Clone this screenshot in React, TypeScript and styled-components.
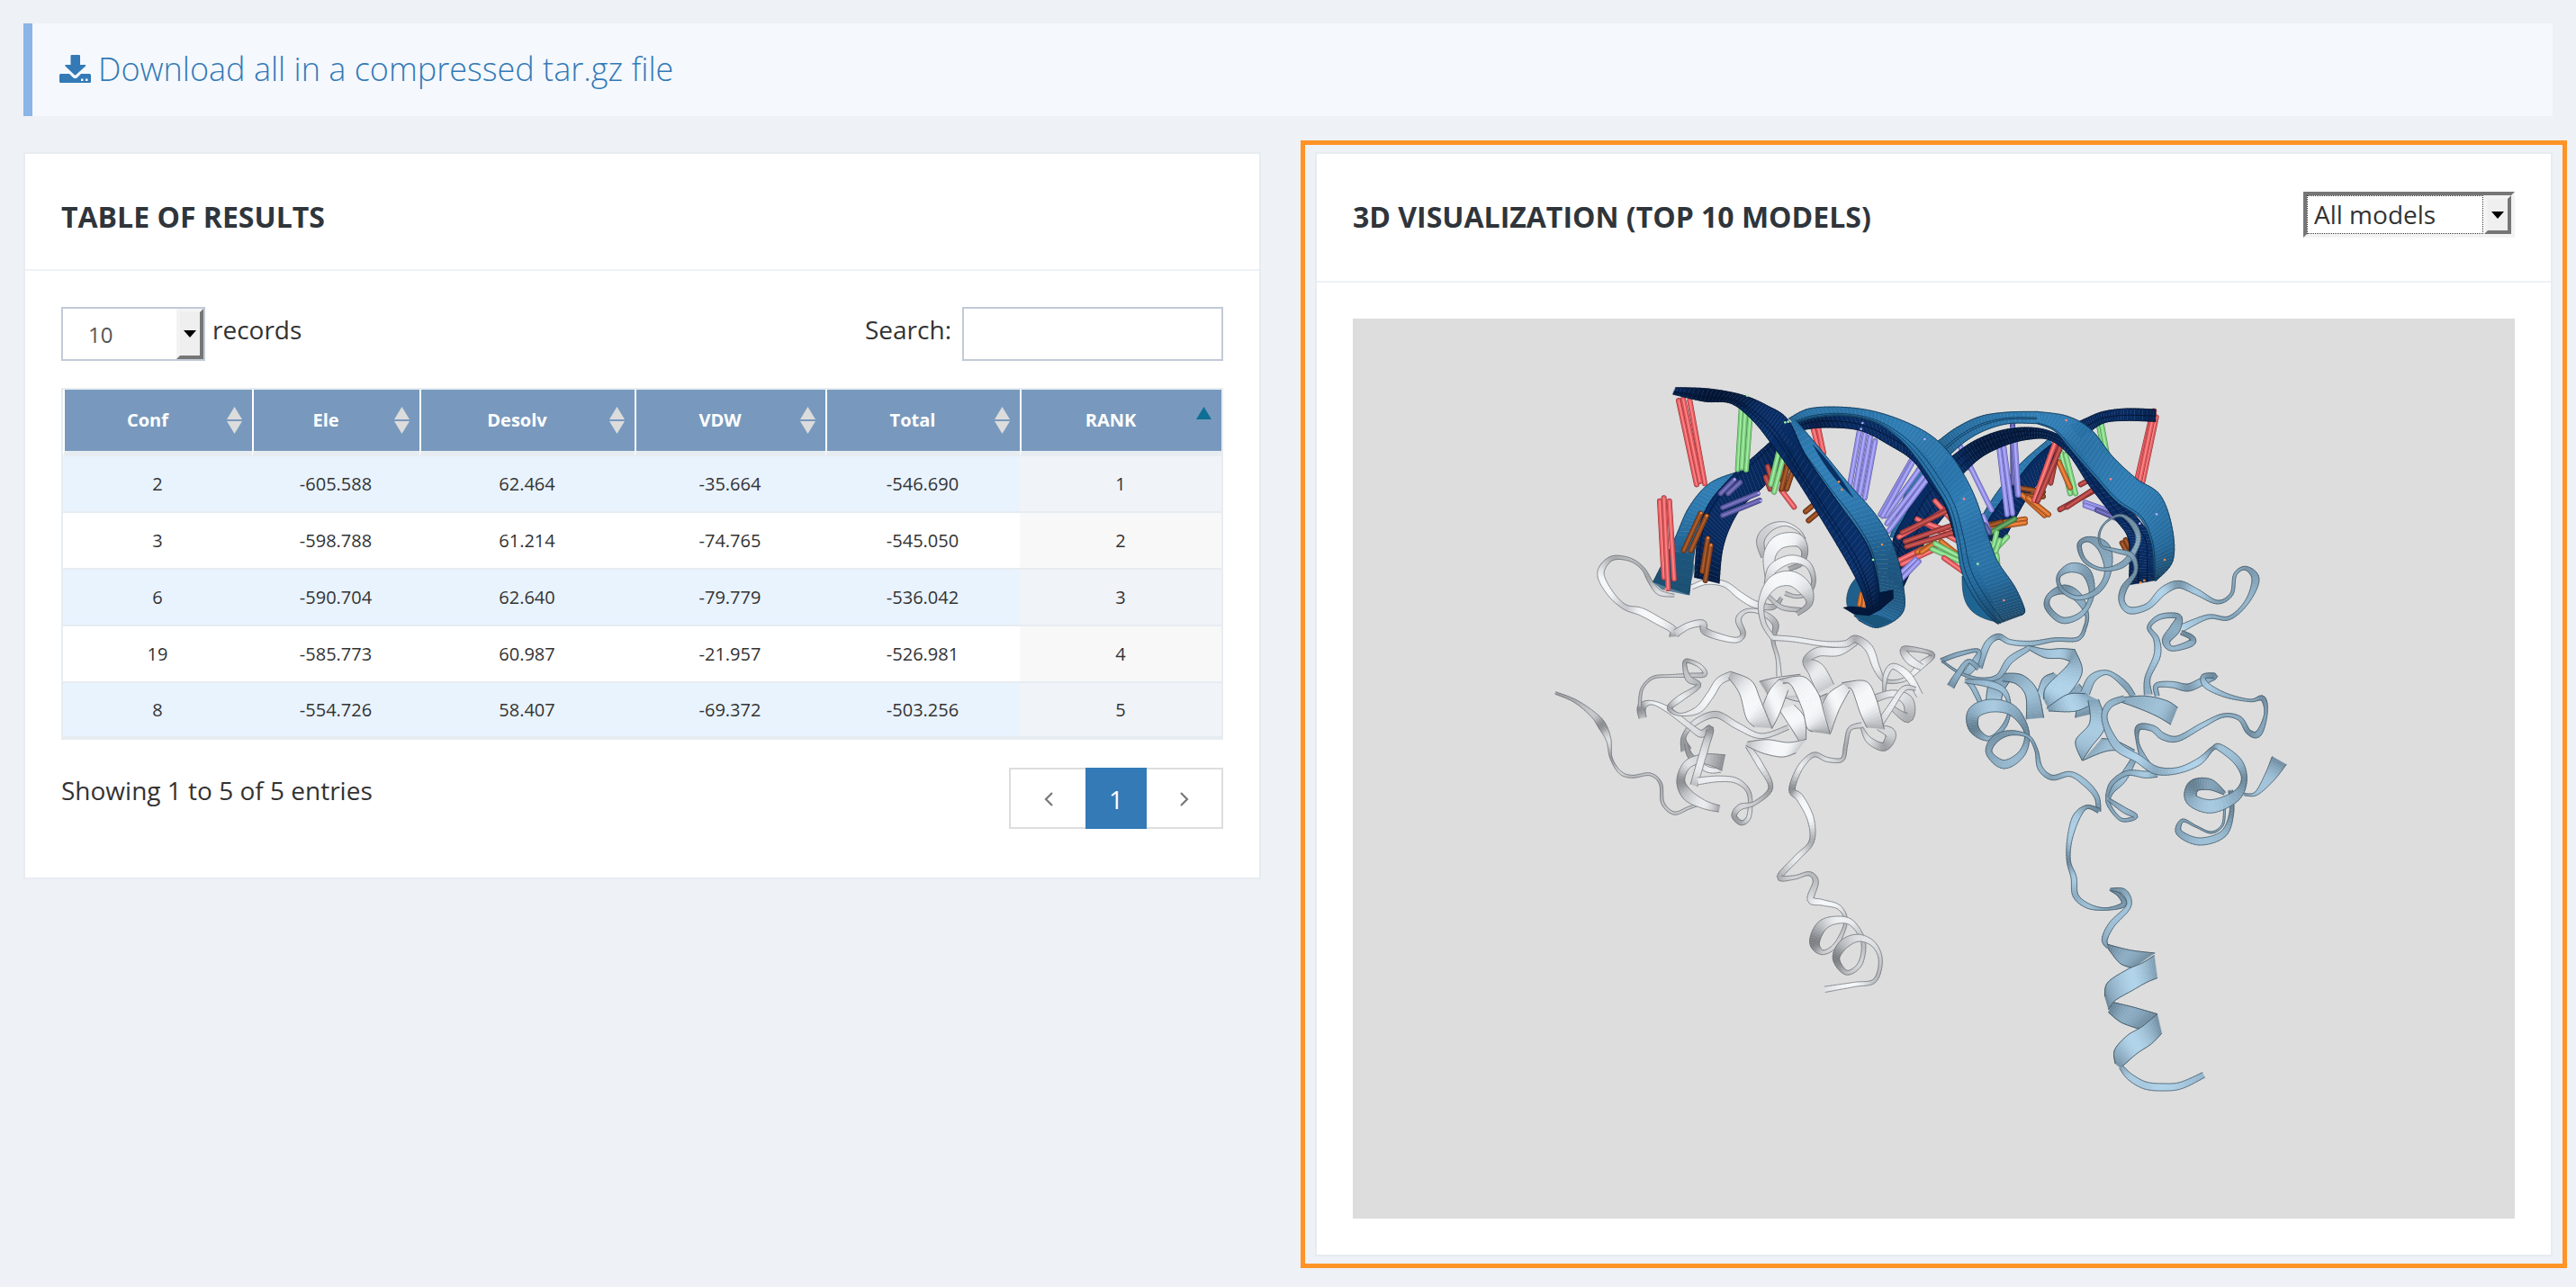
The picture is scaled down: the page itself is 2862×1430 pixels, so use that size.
import React from 'react';
import styled, { createGlobalStyle, css } from 'styled-components';

/* ------------------------------------------------------------------ */
/* Page styles                                                         */
/* ------------------------------------------------------------------ */

const GlobalStyle = createGlobalStyle`
  *, *::before, *::after { box-sizing: border-box; }
  body {
    margin: 0;
    background: #eef1f5;
    color: #333;
    font-family: "Open Sans", "Noto Sans", sans-serif;
    font-size: 28px;
    line-height: 50px;
  }
  button, input, select { font: inherit; color: inherit; }
`;

const Page = styled.main`
  min-height: 100vh;
  padding: 26px;
  display: flex;
  flex-direction: column;
  gap: 40px;
`;

const Note = styled.div`
  padding: 25px 30px 27px;
  border-left: 10px solid #8bb4e7;
  background: #f5f8fd;
`;

const DownloadLink = styled.a`
  display: inline-flex;
  align-items: center;
  gap: 8px;
  color: #337ab7;
  font-size: 36px;
  font-weight: 300;
  line-height: 51px;
  text-decoration: none;
  vertical-align: top;
`;

const Columns = styled.div`
  display: grid;
  grid-template-columns: repeat(2, minmax(0, 1fr));
  align-items: start;
  gap: 60px;
`;

const Highlight = styled.div`
  margin: -13px -16px;
  padding: 8px 11px;
  border: 5px solid #ff9326;
`;

const Panel = styled.section`
  border: 2px solid #e7ecf1;
  background: #fff;
`;

const PanelHeader = styled.header<{ $tall?: boolean }>`
  display: flex;
  justify-content: space-between;
  align-items: flex-start;
  padding: 42px 40px ${(p) => (p.$tall ? 43 : 30)}px;
  border-bottom: 2px solid #eef1f5;
`;

const PanelTitle = styled.h2`
  margin: 0;
  color: #2f353b;
  font-size: 32px;
  font-weight: 700;
  line-height: 56px;
  text-transform: uppercase;
`;

const PanelBody = styled.div<{ $bottom?: number }>`
  padding: 40px 40px ${(p) => p.$bottom ?? 40}px;
`;

const Bar = styled.div`
  display: flex;
  justify-content: space-between;
  align-items: flex-start;
`;

const Field = styled.label`
  display: flex;
  align-items: flex-start;
  gap: 8px;
`;

const SearchField = styled(Field)`
  gap: 12px;
`;

const SearchInput = styled.input`
  width: 290px;
  height: 60px;
  padding: 8px 16px;
  border: 2px solid #c2cad8;
  background: #fff;
  outline: none;
`;

const SelectFrame = styled.span<{ $inset?: boolean }>`
  position: relative;
  display: block;
  ${(p) =>
    p.$inset
      ? css`
          width: 235px;
          height: 51px;
          border: 4px solid;
          border-color: #767676 #f3f3f3 #f3f3f3 #767676;
        `
      : css`
          width: 160px;
          height: 60px;
          border: 2px solid #c2cad8;
        `}
`;

const SelectBox = styled.select<{ $inset?: boolean }>`
  appearance: none;
  display: block;
  height: 100%;
  margin: 0;
  border: 0;
  border-radius: 0;
  background: #fff;
  outline: none;
  ${(p) =>
    p.$inset
      ? css`
          width: calc(100% - 31px);
          padding: 0 7px 2px;
          border: 1px dotted #333;
          color: #333;
          line-height: 38px;
        `
      : css`
          width: 100%;
          padding: 2px 28px 0;
          color: #555;
          font-size: 24px;
        `}
`;

const SelectArrow = styled.span`
  position: absolute;
  inset: 0 0 0 auto;
  width: 30px;
  display: grid;
  place-items: center;
  border: 4px solid;
  border-color: #f3f3f3 #767676 #767676 #f3f3f3;
  background: #efefef;
  pointer-events: none;
`;

/* ------------------------------------------------------------------ */
/* Results table                                                       */
/* ------------------------------------------------------------------ */

const ResultsTable = styled.table`
  width: 100%;
  margin: 30px 0 31px;
  table-layout: fixed;
  border: 2px solid #e7ecf1;
  border-collapse: separate;
  border-spacing: 0;
  font-size: 20px;
  line-height: 28px;
  text-align: center;
`;

const HeadCell = styled.th`
  height: 74px;
  padding: 0;
  border-left: 2px solid #fff;
  border-bottom: 6px solid #e7ecf1;
  background: #7899bd;
  color: #fff;
  font-weight: 700;
`;

const SortButton = styled.button`
  display: flex;
  align-items: center;
  width: 100%;
  height: 68px;
  padding: 0 11px 0 12px;
  border: 0;
  background: none;
  cursor: pointer;
  & > span { flex: 1; }
  & > svg { margin-left: 8px; }
`;

const Row = styled.tr`
  height: 63px;
  &:last-child { height: 61px; }
  &:nth-child(odd) td { background: #e9f3fe; }
  &:nth-child(even) td { background: #fff; }
  &:nth-child(odd) td:last-child { background: #f0f3f8; }
  &:nth-child(even) td:last-child { background: #f8f8f8; }
`;

const Cell = styled.td`
  padding: 0;
  border-bottom: 2px solid #e7ecf1;
`;

const Pager = styled.nav`
  display: flex;
  border: 2px solid #ddd;
`;

const PageButton = styled.button<{ $active?: boolean }>`
  display: grid;
  place-items: center;
  width: ${(p) => (p.$active ? 68 : 83)}px;
  height: ${(p) => (p.$active ? 68 : 64)}px;
  margin: ${(p) => (p.$active ? '-2px 0' : '0')};
  padding: 2px 0 0;
  border: 0;
  background: ${(p) => (p.$active ? '#337ab7' : '#fff')};
  color: ${(p) => (p.$active ? '#fff' : '#777')};
  cursor: pointer;
`;

const Viewer = styled.div`
  height: 1000px;
  background: #ddd;
  & > svg { display: block; width: 100%; height: 100%; }
`;

/* ------------------------------------------------------------------ */
/* Small icons                                                         */
/* ------------------------------------------------------------------ */

const DownloadIcon = () => (
  <svg width="35" height="32" viewBox="0 0 35 32" aria-hidden="true">
    <path
      fill="currentColor"
      d="M13 0h9q1 0 1 1v10h5.500q1.500 0 .5 1.500L18.500 22q-1 1-2 0L6.500 12.500q-1-1.500.5-1.500h5.500V1q0-1 1-1z"
    />
    <path
      fill="currentColor"
      fillRule="evenodd"
      d="M1.500 21H11l4.500 4.500q2 1.500 4 0L24 21h9.500q1.500 0 1.500 1.500v7q0 1.500-1.500 1.500h-32Q0 31 0 29.500v-7Q0 21 1.500 21zM24 26.500v2.500h2.500v-2.500zM29 26.500v2.500h2.500v-2.500z"
    />
  </svg>
);

const SortIcon = ({ ascending }: { ascending?: boolean }) => (
  <svg width="17" height="30" viewBox="0 0 17 30" aria-hidden="true">
    <path d="M8.500 0 17 14H0z" fill={ascending ? '#0f6f94' : '#dcdcdc'} />
    {!ascending && <path d="M8.500 30 17 16H0z" fill="#dcdcdc" />}
  </svg>
);

const ArrowDown = () => (
  <svg width="14" height="8" viewBox="0 0 14 8" aria-hidden="true">
    <path d="M0 0h14L7 8z" fill="#000" />
  </svg>
);

const Chevron = ({ right }: { right?: boolean }) => (
  <svg width="12" height="18" viewBox="0 0 12 18" fill="none" stroke="currentColor" strokeWidth="2.200" aria-hidden="true">
    <path d={right ? 'M2 2l7 7-7 7' : 'M10 2L3 9l7 7'} />
  </svg>
);

/* ------------------------------------------------------------------ */
/* Molecule drawing                                                    */
/* ------------------------------------------------------------------ */

type RGB = [number, number, number];
type Tone = { dark: RGB; mid: RGB; light: RGB; edge: string };

const tones: Record<string, Tone> = {
  navy: { dark: [2, 18, 46], mid: [7, 40, 92], light: [10, 52, 116], edge: '#03132e' },
  blue: { dark: [22, 60, 88], mid: [36, 104, 154], light: [50, 130, 186], edge: '#0d3350' },
  grey: { dark: [106, 109, 113], mid: [186, 188, 192], light: [246, 248, 250], edge: '#6a6d71' },
  cyan: { dark: [78, 102, 118], mid: [130, 162, 184], light: [176, 211, 234], edge: '#3a4f5c' },
};

const shade = (t: Tone, s: number) => {
  const [a, b, k] = s < 0.5 ? [t.dark, t.mid, s * 2] : [t.mid, t.light, s * 2 - 1];
  const c = a.map((v, i) => Math.round(v + (b[i] - v) * Math.min(1, Math.max(0, k))));
  return `rgb(${c.join(',')})`;
};

/* Catmull-Rom interpolation through every component of the point list. */
const smooth = (pts: number[][], steps: number) => {
  const out: number[][] = [];
  for (let i = 0; i < pts.length - 1; i++) {
    const p0 = pts[Math.max(0, i - 1)];
    const p1 = pts[i];
    const p2 = pts[i + 1];
    const p3 = pts[Math.min(pts.length - 1, i + 2)];
    for (let k = 0; k < steps; k++) {
      const t = k / steps;
      out.push(
        p1.map(
          (v, j) =>
            0.5 *
            (2 * v +
              (p2[j] - p0[j]) * t +
              (2 * p0[j] - 5 * v + 4 * p2[j] - p3[j]) * t * t +
              (3 * v - p0[j] - 3 * p2[j] + p3[j]) * t * t * t),
        ),
      );
    }
  }
  out.push(pts[pts.length - 1]);
  return out;
};

const f = (n: number) => n.toFixed(1);

/* Band: each rung is [ax, ay, bx, by, shade]. */
const Strip = ({ rungs, tone, lines = [], edge = 2.4 }: { rungs: number[][]; tone: string; lines?: number[]; edge?: number }) => {
  const t = tones[tone];
  return (
    <g strokeLinecap="round" strokeLinejoin="round">
      {rungs.slice(0, -1).map((r, i) => {
        const n = rungs[i + 1];
        const at = (q: number[], k: number) => `${f(q[0] + (q[2] - q[0]) * k)} ${f(q[1] + (q[3] - q[1]) * k)}`;
        const fill = shade(t, (r[4] + n[4]) / 2);
        return (
          <React.Fragment key={i}>
            <path d={`M${at(r, 0)}L${at(n, 0)}L${at(n, 1)}L${at(r, 1)}Z`} fill={fill} stroke={fill} strokeWidth={1} />
            <path
              d={`M${at(r, 0)}L${at(n, 0)}M${at(r, 1)}L${at(n, 1)}` + lines.map((k) => `M${at(r, k)}L${at(n, k)}`).join('')}
              fill="none"
              stroke={t.edge}
              strokeWidth={edge}
            />
          </React.Fragment>
        );
      })}
    </g>
  );
};

const Band = ({ pts, tone, lines }: { pts: number[][]; tone: string; lines?: number[] }) => (
  <Strip rungs={smooth(pts.map((p) => [p[0], p[1], p[2], p[3], p[4] ?? 0.6]), 8)} tone={tone} lines={lines} />
);

/* Coil: each point is [x, y, width, shade]; the edges follow the normals. */
const Coil = ({ pts, tone }: { pts: number[][]; tone: string }) => {
  const c = smooth(pts.map((p) => [p[0], p[1], p[2], p[3] ?? 0.6]), 7);
  const rungs = c.map((p, i) => {
    const a = c[Math.max(0, i - 1)];
    const b = c[Math.min(c.length - 1, i + 1)];
    const dx = b[0] - a[0];
    const dy = b[1] - a[1];
    const len = Math.hypot(dx, dy) || 1;
    const w = p[2] / 2;
    return [p[0] - (dy / len) * w, p[1] + (dx / len) * w, p[0] + (dy / len) * w, p[1] - (dx / len) * w, p[3]];
  });
  return <Strip rungs={rungs} tone={tone} edge={2} />;
};

const rodColors: Record<string, [string, string, string]> = {
  r: ['#8f3437', '#e0595d', '#ff8587'],
  R: ['#5c2123', '#a9403f', '#cc5a59'],
  g: ['#4a8a4c', '#7ccb7e', '#a3f0a4'],
  G: ['#2f5c31', '#4f8f51', '#6bb36d'],
  v: ['#5a589a', '#8d8ae0', '#b1aeff'],
  V: ['#3b3a70', '#5d5ba4', '#7c79c4'],
  o: ['#7a3a14', '#c7682b', '#f58a45'],
  O: ['#4f240c', '#8a4620', '#b05f2f'],
};

const Rods = ({ list }: { list: [string, number, number, number, number][] }) => (
  <g strokeLinecap="round">
    {list.map(([c, x1, y1, x2, y2], i) => (
      <g key={i}>
        <path d={`M${x1} ${y1}L${x2} ${y2}`} stroke={rodColors[c][0]} strokeWidth={18} />
        <path d={`M${x1} ${y1}L${x2} ${y2}`} stroke={rodColors[c][1]} strokeWidth={15} />
        <path d={`M${x1} ${y1}L${x2} ${y2}`} stroke={rodColors[c][2]} strokeWidth={5} />
      </g>
    ))}
  </g>
);

const Dots = ({ list }: { list: [string, number, number][] }) => (
  <g>
    {list.map(([c, x, y], i) => (
      <circle key={i} cx={x} cy={y} r={4} fill={rodColors[c][2]} />
    ))}
  </g>
);

/* White protein chain, left side. */
const greyBack: number[][][] = [
  [[450, 285, 8, 0.6], [400, 275, 16, 0.8], [370, 240, 14, 0.4], [345, 200, 10, 0.4], [300, 172, 10, 0.5], [240, 170, 14, 0.4], [205, 215, 22, 0.9], [235, 275, 20, 1], [285, 320, 16, 0.6], [340, 335, 24, 1], [400, 365, 24, 1], [445, 390, 24, 0.7], [450, 412, 30, 0.3]],
  [[455, 402, 24, 0.6], [500, 378, 20, 0.9], [545, 372, 22, 0.7], [552, 395, 22, 0.4], [600, 413, 20, 0.9], [658, 423, 16, 0.9], [680, 403, 16, 0.4], [664, 360, 18, 0.7], [690, 333, 12, 0.7], [740, 337, 14, 0.8], [787, 372, 20, 0.4], [780, 425, 12, 0.4], [795, 480, 12, 0.7], [800, 535, 16, 0.8]],
  [[510, 258, 14, 0.9], [560, 242, 16, 1], [620, 250, 18, 0.9], [670, 285, 22, 1], [720, 312, 22, 0.9], [780, 320, 16, 0.4], [808, 292, 10, 0.4]],
  [[748, 165, 16, 0.4], [738, 112, 26, 0.6], [770, 74, 22, 0.7], [820, 62, 12, 0.9], [865, 82, 8, 0.8], [885, 110, 8, 0.5]],
];
const greyFront: number[][][] = [
  [[770, 225, 34, 0.8], [768, 160, 40, 0.9], [800, 118, 44, 1], [860, 112, 40, 0.9], [885, 145, 22, 0.4], [872, 185, 16, 0.3], [832, 202, 12, 0.4]],
  [[760, 250, 20, 0.5], [780, 200, 30, 0.9], [840, 172, 26, 1], [895, 188, 20, 0.8], [915, 235, 14, 0.4], [900, 275, 12, 0.4], [860, 288, 10, 0.6], [820, 278, 12, 0.5]],
  [[880, 330, 12, 0.4], [810, 322, 14, 0.6], [766, 288, 12, 0.5]],
  [[780, 418, 16, 0.8], [748, 370, 16, 0.7], [742, 305, 22, 0.8], [780, 245, 40, 1], [840, 232, 46, 1], [888, 265, 44, 0.8], [900, 310, 20, 0.4], [860, 342, 12, 0.4]],
  [[55, 588, 7, 0.3], [120, 613, 10, 0.4], [180, 655, 18, 0.6], [210, 690, 26, 0.2], [232, 735, 16, 0.8], [240, 790, 7, 0.3], [270, 835, 9, 0.7], [310, 848, 8, 0.5], [370, 841, 8, 0.6], [405, 870, 9, 0.4], [412, 930, 10, 0.5], [450, 962, 9, 0.6], [500, 945, 8, 0.6], [545, 930, 8, 0.5]],
  [[490, 765, 34, 0.3], [482, 725, 14, 0.3], [520, 680, 18, 0.8], [590, 655, 20, 0.5], [660, 690, 20, 0.9], [740, 722, 16, 0.8], [830, 695, 14, 0.6]],
  [[490, 745, 10, 0.3], [505, 785, 18, 0.3], [560, 825, 18, 0.9], [605, 828, 14, 0.8]],
  [[600, 948, 20, 0.3], [550, 935, 26, 0.9], [495, 905, 36, 0.6], [472, 860, 26, 0.2], [495, 810, 26, 0.8], [550, 793, 30, 0.6], [615, 805, 50, 0.2]],
  [[345, 665, 24, 0.5], [342, 632, 26, 0.2], [375, 618, 12, 0.9], [430, 640, 18, 0.9], [500, 690, 18, 0.8], [540, 715, 22, 0.7], [570, 700, 22, 0.2], [555, 750, 24, 0.7], [533, 820, 24, 0.9], [516, 875, 24, 0.5]],
  [[530, 862, 22, 0.9], [600, 855, 18, 0.9], [660, 862, 16, 0.8], [700, 900, 13, 0.5], [700, 970, 14, 0.8], [675, 992, 14, 0.4], [650, 970, 16, 0.3], [670, 943, 18, 0.7], [720, 930, 12, 0.6], [772, 882, 14, 0.3], [735, 810, 20, 0.9], [695, 752, 16, 0.6]],
  [[335, 630, 10, 0.5], [343, 575, 8, 0.5], [380, 540, 8, 0.5], [440, 535, 8, 0.7], [500, 533, 12, 0.6], [552, 530, 14, 0.5], [535, 503, 12, 0.8], [490, 488, 12, 0.3], [487, 515, 14, 0.5], [500, 545, 20, 0.6], [532, 565, 14, 0.4], [470, 605, 20, 0.9], [435, 635, 16, 0.3], [470, 655, 8, 0.8], [530, 640, 22, 0.9], [570, 595, 24, 1], [600, 552, 24, 0.9], [642, 532, 24, 0.6]],
  [[1065, 425, 16, 0.5], [1000, 458, 26, 0.9], [930, 460, 28, 0.8], [893, 488, 28, 0.4], [925, 520, 56, 0.9], [955, 575, 62, 0.6]],
  [[780, 416, 16, 0.8], [850, 421, 16, 0.9], [950, 435, 16, 0.9], [1020, 435, 20, 0.8], [1055, 420, 22, 0.4], [1100, 450, 26, 0.9], [1125, 510, 22, 0.9], [1155, 550, 12, 0.5], [1220, 545, 12, 0.8], [1275, 500, 22, 0.9], [1312, 470, 14, 0.3], [1270, 455, 12, 0.6], [1215, 453, 20, 0.4], [1235, 485, 26, 0.9], [1275, 508, 20, 0.8]],
  [[1150, 590, 8, 0.4], [1155, 535, 16, 0.8], [1180, 505, 18, 0.8], [1230, 535, 24, 1], [1268, 595, 22, 0.8]],
  [[1120, 605, 24, 0.5], [1180, 590, 22, 0.9], [1230, 615, 36, 0.7], [1228, 665, 30, 0.4], [1170, 630, 12, 0.7]],
  [[1075, 695, 8, 0.5], [1100, 735, 20, 0.8], [1150, 755, 26, 0.3], [1172, 715, 34, 0.7], [1130, 695, 16, 0.7]],
  [[1130, 690, 24, 0.6], [1170, 635, 20, 0.9], [1215, 575, 16, 0.8], [1255, 575, 10, 0.6]],
];
const greyHelix: number[][][] = [
  [[735, 552, 760, 590, 0.3], [790, 540, 795, 565, 0.8], [870, 530, 870, 545, 0.6]],
  [[810, 600, 920, 590, 0.5], [880, 615, 940, 600, 0.8], [960, 590, 975, 640, 0.4]],
  [[800, 640, 850, 625, 0.9], [835, 690, 885, 665, 1], [865, 735, 890, 730, 0.5]],
  [[695, 740, 690, 752, 0.5], [760, 733, 745, 775, 0.9], [830, 742, 810, 787, 1], [890, 732, 855, 775, 0.6]],
  [[742, 635, 776, 698, 0.5], [768, 580, 800, 655, 1], [800, 545, 830, 580, 0.8]],
  [[640, 522, 632, 542, 0.4], [708, 550, 668, 590, 0.9], [738, 610, 690, 665, 1], [776, 697, 716, 693, 0.5]],
  [[945, 620, 972, 712, 0.5], [970, 585, 1000, 640, 1], [1020, 555, 1035, 580, 0.8]],
  [[800, 546, 815, 556, 0.5], [880, 537, 842, 566, 0.9], [928, 585, 878, 640, 1], [950, 650, 892, 695, 0.9], [970, 716, 910, 708, 0.3]],
  [[1010, 556, 1030, 572, 0.5], [1090, 552, 1045, 582, 0.9], [1125, 610, 1070, 650, 1], [1150, 700, 1092, 695, 0.4]],
];
const greyTail: number[][] = [[1075, 688, 16, 0.7], [1035, 700, 12, 0.6], [1022, 750, 12, 0.4], [1010, 795, 12, 0.5], [960, 795, 14, 0.8], [915, 780, 14, 0.5], [870, 820, 18, 0.9], [843, 888, 20, 0.2], [870, 915, 24, 0.9], [905, 980, 22, 1], [908, 1050, 16, 0.4], [860, 1100, 18, 0.9], [802, 1160, 18, 0.4], [850, 1162, 12, 0.7], [900, 1150, 12, 0.5], [922, 1175, 18, 0.5], [905, 1230, 22, 0.8], [945, 1240, 18, 1], [1000, 1255, 14, 0.9], [1022, 1300, 10, 0.5], [990, 1370, 14, 0.7], [945, 1395, 14, 0.6], [918, 1365, 32, 0.1], [940, 1315, 34, 0.5], [985, 1295, 24, 0.9], [1040, 1302, 18, 0.9], [1080, 1360, 14, 0.5], [1070, 1430, 14, 0.7], [1025, 1458, 14, 0.5], [990, 1415, 22, 0.1], [1015, 1370, 30, 0.5], [1065, 1350, 22, 0.8], [1115, 1370, 16, 0.8], [1138, 1420, 12, 0.6], [1118, 1483, 12, 0.5], [1050, 1495, 14, 1], [953, 1510, 18, 0.8]];

/* Light blue protein chain, right side. */
const cyanCoils: number[][][] = [
  [[205, 545, 24, 0.4], [220, 500, 22, 0.7], [240, 460, 20, 0.8], [272, 442, 18, 0.4], [310, 460, 16, 0.9], [380, 465, 16, 0.7], [460, 452, 12, 0.6], [535, 450, 12, 0.6], [560, 410, 10, 0.4], [565, 365, 12, 0.5], [535, 310, 30, 0.6], [490, 285, 30, 0.3], [442, 305, 16, 0.5], [435, 345, 18, 0.3], [485, 388, 20, 0.6], [550, 365, 16, 0.7], [582, 300, 16, 0.5], [565, 230, 30, 0.4], [515, 212, 30, 0.7], [472, 240, 12, 0.4], [482, 285, 12, 0.4], [535, 313, 14, 0.7], [600, 290, 18, 0.5], [635, 230, 20, 0.6], [625, 150, 40, 0.5], [575, 118, 18, 0.4], [541, 135, 14, 0.3], [560, 190, 12, 0.4], [620, 218, 10, 0.6], [690, 198, 20, 0.5], [735, 130, 16, 0.6], [725, 75, 18, 0.4], [680, 38, 8, 0.4], [630, 60, 5, 0.5], [607, 100, 5, 0.5], [615, 140, 6, 0.5], [660, 155, 12, 0.6], [715, 172, 16, 0.5], [728, 225, 12, 0.4], [690, 280, 20, 0.4], [682, 325, 18, 0.6], [710, 355, 22, 0.8], [770, 340, 20, 0.8], [820, 290, 26, 1], [872, 268, 24, 0.4], [930, 292, 20, 0.9], [1000, 327, 12, 0.5], [1048, 300, 10, 0.5], [1060, 235, 10, 0.6], [1095, 214, 12, 0.4], [1128, 250, 24, 0.5], [1100, 325, 14, 0.7], [1040, 380, 12, 0.5], [970, 376, 14, 0.7], [885, 412, 24, 1]],
  [[770, 635, 26, 0.6], [768, 580, 18, 0.6], [800, 505, 22, 0.9], [797, 450, 18, 0.7], [773, 410, 12, 0.5], [810, 376, 16, 0.7], [870, 375, 18, 0.4], [860, 415, 34, 0.6], [830, 455, 26, 0.5], [850, 482, 16, 0.7], [912, 464, 22, 0.6], [915, 445, 16, 0.3], [880, 428, 14, 0.3]],
  [[800, 640, 14, 0.6], [798, 605, 16, 0.6], [850, 602, 20, 0.8], [902, 612, 24, 0.4], [950, 592, 24, 0.8], [992, 574, 18, 0.3], [955, 575, 16, 0.5], [965, 605, 20, 0.9], [1030, 638, 14, 0.7], [1110, 655, 8, 0.6], [1152, 648, 16, 0.3], [1162, 700, 10, 0.5], [1138, 765, 20, 0.5], [1105, 760, 16, 0.3], [1075, 715, 14, 0.6], [1020, 705, 12, 0.6], [950, 738, 16, 0.9], [870, 782, 18, 0.6], [820, 775, 22, 0.7], [785, 748, 20, 0.7], [738, 745, 18, 0.3], [735, 795, 8, 0.4], [760, 860, 24, 0.7], [785, 888, 20, 0.6]],
  [[720, 640, 16, 0.5], [690, 600, 20, 0.5], [635, 562, 14, 0.8], [585, 580, 26, 0.8], [560, 630, 30, 0.7]],
  [[720, 855, 18, 0.5], [685, 915, 26, 0.8], [645, 960, 18, 0.5], [638, 1000, 12, 0.5], [680, 1052, 10, 0.6], [728, 1042, 14, 0.5], [690, 1020, 18, 0.7], [638, 985, 10, 0.4]],
  [[800, 900, 20, 0.4], [760, 902, 22, 0.9], [700, 897, 16, 0.6], [650, 930, 14, 0.5], [632, 975, 8, 0.5]],
  [[1090, 968, 6, 0.5], [1130, 965, 12, 0.8], [1175, 910, 36, 0.8], [1207, 855, 54, 0.3]],
  [[1045, 955, 14, 0.2], [1048, 1030, 14, 0.3], [1020, 1100, 22, 0.7], [940, 1125, 24, 0.8], [873, 1095, 20, 0.5], [885, 1055, 10, 0.5], [930, 1075, 6, 0.5], [980, 1095, 6, 0.5], [1018, 1070, 6, 0.6], [1025, 1010, 6, 0.6]],
];
const cyanBands: number[][][] = [
  [[230, 655, 280, 655, 0.9], [240, 600, 290, 620, 0.6], [285, 565, 320, 575, 0.4]],
  [[285, 565, 285, 590, 0.4], [350, 570, 330, 600, 0.6], [400, 620, 362, 640, 0.8], [422, 712, 364, 717, 0.4]],
  [[402, 625, 430, 665, 0.9], [420, 580, 455, 610, 0.7], [455, 563, 475, 575, 0.5]],
  [[540, 600, 500, 630, 0.5], [575, 650, 528, 670, 0.7], [580, 700, 528, 712, 0.3]],
  [[370, 472, 370, 484, 0.6], [430, 484, 425, 512, 0.8], [480, 482, 480, 515, 0.9], [525, 485, 510, 525, 0.4]],
  [[525, 485, 510, 525, 0.4], [550, 560, 490, 550, 0.8], [500, 640, 430, 610, 1], [440, 690, 422, 650, 0.4]],
  [[440, 690, 432, 680, 0.4], [530, 690, 500, 635, 1], [605, 655, 560, 632, 0.5]],
  [[570, 655, 605, 652, 0.5], [575, 730, 627, 740, 0.9], [528, 790, 580, 810, 0.8], [550, 855, 552, 852, 0.4]],
  [[552, 855, 615, 782, 0.5], [640, 822, 660, 788, 0.8], [720, 830, 725, 820, 0.5]],
  [[680, 645, 665, 655, 0.5], [760, 640, 740, 682, 0.7], [830, 655, 800, 708, 0.8], [868, 678, 845, 735, 0.4]],
];
const cyanOver: number[][][] = [
  [[690, 648, 18, 0.6], [640, 670, 22, 0.7], [625, 720, 18, 0.7], [665, 805, 28, 0.8], [735, 848, 26, 1], [797, 888, 26, 0.6], [870, 888, 20, 0.9], [940, 858, 22, 1], [985, 815, 12, 0.3], [1010, 812, 22, 0.8], [1070, 860, 26, 0.7], [1090, 920, 18, 0.3], [1060, 975, 34, 0.6], [980, 1008, 44, 0.9], [915, 985, 40, 0.6], [922, 940, 40, 0.2], [975, 935, 36, 0.5], [1025, 965, 10, 0.3]],
  [[80, 522, 14, 0.3], [140, 500, 14, 0.6], [205, 490, 12, 0.5], [185, 540, 26, 0.8], [155, 572, 18, 0.5]],
  [[85, 525, 6, 0.3], [140, 562, 8, 0.5], [210, 585, 12, 0.5], [270, 575, 16, 0.6], [310, 520, 22, 0.8], [370, 482, 16, 0.7]],
  [[112, 608, 24, 0.3], [135, 570, 20, 0.6], [170, 525, 14, 0.6], [205, 548, 16, 0.4]],
  [[165, 590, 10, 0.4], [185, 610, 16, 0.7], [210, 660, 14, 0.6]],
  [[160, 590, 12, 0.5], [240, 600, 22, 0.8], [290, 625, 18, 0.8], [308, 680, 8, 0.5], [290, 740, 14, 0.5], [240, 782, 14, 0.7], [190, 750, 32, 0.2], [190, 695, 42, 0.6], [250, 672, 42, 0.9], [320, 690, 34, 0.6], [365, 760, 16, 0.3], [350, 830, 22, 0.7], [290, 868, 28, 0.7], [240, 830, 20, 0.5], [258, 785, 24, 0.4], [310, 763, 16, 0.4], [370, 775, 10, 0.6], [397, 820, 10, 0.4], [410, 880, 16, 0.7], [450, 912, 16, 0.5], [510, 900, 16, 0.8], [560, 930, 20, 0.8], [598, 975, 16, 0.6], [605, 1025, 14, 0.3]],
];

const C7 = 'translate(1820 400) scale(.33333)';
const C8 = 'translate(2130 400) scale(.33333)';
const C9 = 'translate(1710 560) scale(.33333 .35714)';
const C10 = 'translate(2130 560) scale(.33333)';
const C11 = 'translate(2230 880) scale(.33333)';

const Molecule = () => (
  <svg viewBox="1503 354 1291 1000" role="img" aria-label="Protein and DNA complex">
    {/* White chain behind the helix */}
    <g transform={C9}>
      {greyBack.map((p, i) => <Coil key={i} pts={p} tone="grey" />)}
    </g>

    {/* Rear DNA strands */}
    <g transform={C7}>
      <Band tone="blue" pts={[[340, 370, 330, 385, 0.7], [240, 410, 290, 430, 0.9], [170, 490, 235, 520, 0.8], [120, 600, 195, 600, 0.5], [50, 740, 170, 783, 0.1]]} />
      <Band tone="navy" lines={[0.15]} pts={[[460, 255, 520, 300, 0.3], [390, 318, 430, 410, 0.5], [310, 390, 350, 485, 0.6], [235, 480, 305, 560, 0.6], [200, 580, 280, 640, 0.5], [188, 725, 270, 745, 0.2]]} />
      <path d="M50 740 78 765 165 784 190 690 175 650 110 640z" fill="#1d5478" opacity=".7" />
      <Rods list={[['V', 275, 445, 320, 400], ['V', 300, 445, 340, 408], ['V', 282, 492, 398, 445], ['V', 282, 518, 405, 468]]} />
      <Rods list={[['R', 432, 355, 445, 400], ['R', 425, 390, 440, 430], ['r', 478, 435, 520, 490], ['O', 558, 505, 600, 470], ['O', 568, 535, 610, 500], ['r', 580, 215, 603, 300], ['r', 598, 215, 618, 310]]} />
      <Rods list={[['O', 480, 340, 480, 400], ['O', 500, 345, 478, 430], ['O', 518, 360, 495, 430], ['g', 470, 300, 442, 415], ['g', 488, 310, 453, 440]]} />
      <Rods list={[['r', 135, 135, 195, 415], ['r', 172, 135, 222, 412], ['r', 150, 130, 206, 405], ['g', 345, 150, 332, 365], ['g', 374, 180, 360, 366], ['g', 358, 160, 345, 360]]} />
      <Rods list={[['r', 72, 470, 86, 725], ['r', 104, 470, 120, 730], ['r', 86, 460, 100, 762], ['O', 208, 512, 152, 635], ['O', 228, 520, 176, 635], ['O', 232, 595, 214, 705], ['O', 242, 618, 224, 735]]} />
      <Dots list={[['v', 322, 398], ['v', 402, 444], ['v', 410, 469], ['o', 210, 510], ['o', 229, 519], ['o', 233, 593], ['o', 243, 617], ['r', 92, 764]]} />
      {/* middle rear strand */}
      <Band tone="blue" pts={[[930, 360, 990, 400, 0.8], [880, 470, 930, 500, 0.7], [840, 590, 870, 600, 0.5]]} />
      <Band tone="navy" lines={[0.3, 0.6]} pts={[[1060, 340, 1100, 430, 0.5], [960, 400, 1020, 520, 0.6], [890, 520, 960, 600, 0.6], [850, 600, 920, 680, 0.4], [830, 720, 880, 765, 0.2]]} />
      <Rods list={[['v', 738, 235, 705, 420], ['v', 756, 245, 722, 440], ['v', 774, 255, 738, 450], ['v', 790, 270, 755, 460]]} />
      <Rods list={[['v', 925, 310, 808, 515], ['v', 940, 360, 826, 520], ['v', 915, 340, 815, 520], ['v', 950, 390, 830, 545], ['v', 962, 400, 835, 570]]} />
    </g>

    <g transform={C8}>
      <Band tone="blue" pts={[[440, 262, 455, 285, 0.7], [340, 350, 370, 370, 0.8], [260, 450, 300, 450, 0.8], [205, 540, 240, 550, 0.5]]} />
      <Band tone="navy" pts={[[455, 275, 470, 310, 0.4], [390, 330, 410, 400, 0.6], [310, 430, 360, 470, 0.6], [240, 530, 300, 580, 0.5], [220, 590, 280, 620, 0.2]]} />
      <Rods list={[['g', 600, 190, 622, 300], ['g', 612, 200, 632, 310], ['r', 780, 195, 735, 390], ['r', 797, 190, 752, 405], ['r', 790, 170, 742, 400]]} />
      <Rods list={[['g', 480, 310, 510, 445], ['g', 495, 315, 528, 445], ['o', 472, 340, 510, 425], ['R', 545, 415, 600, 385], ['R', 476, 498, 600, 430], ['R', 500, 490, 605, 420]]} />
      <Rods list={[['O', 335, 425, 420, 440], ['O', 340, 450, 420, 455], ['o', 350, 450, 425, 518], ['o', 370, 460, 438, 515], ['R', 470, 290, 445, 410], ['r', 460, 275, 390, 468], ['R', 480, 285, 402, 470]]} />
      <Rods list={[['V', 318, 200, 320, 410], ['v', 272, 280, 300, 515], ['v', 318, 228, 335, 450], ['v', 286, 270, 318, 512], ['v', 145, 290, 175, 360], ['v', 172, 345, 248, 500], ['v', 326, 272, 338, 450]]} />
      <Rods list={[['o', 235, 550, 360, 530], ['o', 240, 560, 360, 542], ['O', 230, 555, 280, 540], ['G', 245, 575, 325, 530], ['g', 265, 575, 245, 660], ['g', 300, 590, 262, 630], ['g', 275, 600, 255, 660], ['g', 265, 650, 268, 680], ['v', 220, 520, 240, 570], ['V', 225, 550, 240, 575]]} />
      <Rods list={[['v', 560, 475, 670, 515], ['v', 560, 485, 690, 530], ['V', 600, 500, 680, 535], ['O', 683, 610, 700, 640], ['O', 695, 600, 710, 630]]} />
      <Rods list={[['r', 60, 470, 140, 560], ['r', 0, 530, 130, 600], ['r', 20, 540, 130, 580], ['r', -60, 590, 110, 490], ['R', -50, 575, 105, 500], ['R', -40, 605, 120, 550], ['R', -35, 622, 120, 575], ['r', -65, 670, 15, 630], ['r', -50, 680, 60, 630], ['o', 0, 640, 50, 615], ['o', 15, 640, 60, 610], ['o', 80, 605, 150, 660], ['g', 60, 612, 140, 655], ['g', 50, 630, 140, 670], ['r', 90, 660, 160, 710], ['v', -60, 715, -5, 665], ['v', -50, 728, 5, 672]]} />
      {/* right navy end, arching over the top */}
      <Band tone="navy" lines={[0.55]} pts={[[795, 165, 795, 205, 0.3], [700, 162, 700, 202, 0.6], [620, 172, 628, 208, 0.5], [560, 196, 580, 235, 0.5], [510, 220, 545, 262, 0.3]]} />
      {/* inner navy arch */}
      <Band tone="navy" lines={[0.3, 0.65]} pts={[[70, 360, 120, 420, 0.3], [115, 322, 160, 372, 0.5], [190, 270, 220, 320, 0.2], [280, 235, 300, 282, 0.2], [370, 225, 375, 264, 0.2], [450, 240, 440, 266, 0.4], [530, 290, 505, 315, 0.6], [620, 410, 575, 420, 0.6], [720, 510, 660, 530, 0.6], [785, 600, 702, 590, 0.7], [792, 680, 708, 670, 0.6], [792, 735, 706, 750, 0.3]]} />
      {/* light arch */}
      <Band tone="blue" lines={[0.5, 0.62]} pts={[[70, 270, 105, 320, 0.4], [130, 226, 160, 272, 0.6], [210, 188, 225, 235, 0.7], [300, 174, 305, 212, 0.8], [400, 172, 400, 212, 0.9]]} />
      <Band tone="blue" lines={[0.93]} pts={[[400, 172, 400, 212, 0.9], [500, 187, 460, 238, 0.9], [580, 232, 520, 308, 0.7], [650, 320, 600, 400, 0.8], [730, 395, 665, 472, 0.9], [810, 450, 745, 530, 0.8], [850, 560, 780, 610, 0.6], [852, 670, 788, 690, 0.3], [795, 737, 790, 733, 0]]} />
      <Dots list={[['r', 497, 201], ['r', 645, 397], ['v', 798, 514], ['v', 742, 545], ['o', 825, 666], ['o', 745, 742], ['o', 757, 735]]} />
    </g>

    {/* Central arch running into the front loop */}
    <g transform={C7}>
      <Band tone="navy" lines={[0.5]} pts={[[525, 205, 535, 235, 0.4], [600, 182, 620, 225, 0.3], [720, 190, 740, 235, 0.6], [830, 225, 840, 285, 0.6], [930, 290, 915, 335, 0.5], [1000, 370, 970, 410, 0.6], [1050, 460, 1020, 480, 0.5], [1080, 580, 1055, 590, 0.4]]} />
      <path d="M1080 720C1080 800 1090 850 1190 872L1150 780z" fill="#1f6593" stroke="#0d3350" strokeWidth="2" />
      <path d="M1075 640C1085 740 1110 800 1195 876L1180 800 1110 650z" fill="#04204d" />
      <Band tone="blue" lines={[0.75, 0.9]} pts={[[502, 195, 520, 212, 0.4], [570, 162, 590, 192, 0.7], [680, 157, 690, 186, 0.7], [790, 172, 790, 208, 0.8], [900, 210, 870, 262, 0.9], [990, 262, 930, 330, 0.8], [1060, 340, 990, 420, 0.8], [1120, 450, 1035, 500, 0.9], [1158, 560, 1060, 600, 0.7], [1195, 665, 1080, 710, 0.7], [1255, 755, 1125, 800, 0.4], [1288, 830, 1175, 860, 0.2], [1280, 850, 1200, 880, 0]]} />
      <Dots list={[['v', 748, 210], ['v', 743, 230], ['v', 955, 264], ['r', 1086, 463], ['g', 1132, 680], ['r', 1219, 801]]} />
      {/* front-left loop */}
      <path d="M740 715C700 745 690 790 697 820L770 850 760 760z" fill="#1f5f8b" stroke="#0d3350" strokeWidth="2" />
      <Rods list={[['o', 745, 780, 738, 815], ['o', 755, 780, 752, 820]]} />
      <Band tone="blue" lines={[0.12]} pts={[[475, 225, 525, 200, 0.6], [560, 330, 610, 300, 0.9], [640, 440, 700, 410, 0.9], [715, 540, 795, 520, 0.7], [770, 640, 855, 630, 0.4], [790, 740, 885, 760, 0.3], [790, 810, 880, 845, 0.4], [760, 845, 800, 892, 0.6], [720, 852, 735, 868, 0.3]]} />
      <Band tone="navy" lines={[0.25, 0.4]} pts={[[116, 114, 125, 92, 0.5], [220, 138, 235, 96, 0.1], [310, 145, 345, 116, 0.2], [385, 205, 430, 152, 0.6], [445, 280, 500, 200, 0.7], [520, 385, 560, 320, 0.5], [620, 545, 670, 480, 0.7], [700, 680, 760, 610, 0.8], [745, 770, 795, 720, 0.5], [768, 850, 810, 830, 0.1]]} />
      <path d="M720 845 740 865 795 893 850 870 800 850z" fill="#1a557c" />
      <path d="M682 825C730 812 770 835 800 830L805 775 850 765 852 795 805 835 770 853 720 848z" fill="#03183a" />
      <path d="M583 283Q650 350 718 460 640 390 583 283z" fill="#0a2f64" stroke="#0d3350" />
      <Dots list={[['g', 490, 208], ['g', 500, 206], ['g', 364, 119], ['o', 669, 406], ['o', 679, 432], ['o', 813, 615], ['g', 783, 666]]} />
    </g>

    {/* White chain in front */}
    <g transform={C9}>
      {greyFront.map((p, i) => <Coil key={i} pts={p} tone="grey" />)}
      {greyHelix.map((p, i) => <Band key={i} pts={p} tone="grey" />)}
      <Coil pts={greyTail} tone="grey" />
    </g>

    {/* Light blue chain */}
    <g transform={C10}>
      {cyanBands.slice(0, 4).map((p, i) => <Band key={i} pts={p} tone="cyan" />)}
      {cyanCoils.map((p, i) => <Coil key={i} pts={p} tone="cyan" />)}
      {cyanBands.slice(4).map((p, i) => <Band key={i} pts={p} tone="cyan" />)}
      {cyanOver.map((p, i) => <Coil key={i} pts={p} tone="cyan" />)}
    </g>
    <g transform={C11}>
      <Coil tone="cyan" pts={[[305, 62, 16, 0.3], [265, 50, 12, 0.4], [230, 85, 24, 0.9], [208, 160, 16, 0.9], [205, 230, 12, 0.3], [222, 285, 18, 0.9], [228, 345, 18, 0.6], [270, 380, 16, 0.8], [330, 390, 8, 0.5], [388, 375, 16, 0.4], [375, 345, 12, 0.3], [343, 325, 6, 0.3]]} />
      <Coil tone="cyan" pts={[[345, 325, 8, 0.3], [390, 333, 18, 0.5], [405, 380, 16, 0.8], [350, 440, 20, 0.8], [325, 490, 18, 0.6], [335, 518, 8, 0.4]]} />
      <Band tone="cyan" pts={[[335, 508, 335, 520, 0.2], [410, 527, 375, 570, 0.6], [492, 537, 418, 587, 0.3]]} />
      <Band tone="cyan" pts={[[350, 700, 338, 735, 0.2], [420, 717, 380, 768, 0.6], [500, 740, 440, 790, 0.3]]} />
      <Band tone="cyan" pts={[[490, 545, 500, 620, 0.4], [450, 570, 462, 636, 0.8], [400, 592, 420, 660, 1], [335, 635, 360, 695, 0.6], [325, 680, 338, 725, 0.2]]} />
      <Band tone="cyan" pts={[[500, 740, 515, 805, 0.3], [450, 782, 480, 840, 0.8], [400, 812, 435, 870, 1], [358, 860, 400, 900, 0.6], [360, 905, 378, 920, 0.3]]} />
      <Coil tone="cyan" pts={[[380, 917, 14, 0.5], [410, 950, 22, 0.9], [460, 978, 24, 0.9], [520, 984, 24, 1], [580, 978, 22, 0.9], [655, 943, 18, 0.7]]} />
    </g>
  </svg>
);

/* ------------------------------------------------------------------ */
/* Data and page                                                       */
/* ------------------------------------------------------------------ */

const columns = [
  { name: 'Conf', width: 210 },
  { name: 'Ele', width: 186 },
  { name: 'Desolv', width: 239 },
  { name: 'VDW', width: 212 },
  { name: 'Total', width: 216 },
  { name: 'RANK', width: 224 },
];

const results = [
  ['2', '-605.588', '62.464', '-35.664', '-546.690', '1'],
  ['3', '-598.788', '61.214', '-74.765', '-545.050', '2'],
  ['6', '-590.704', '62.640', '-79.779', '-536.042', '3'],
  ['19', '-585.773', '60.987', '-21.957', '-526.981', '4'],
  ['8', '-554.726', '58.407', '-69.372', '-503.256', '5'],
];

export default function App() {
  return (
    <>
      <GlobalStyle />
      <Page>
        <Note>
          <DownloadLink href="#download">
            <DownloadIcon />
            Download all in a compressed tar.gz file
          </DownloadLink>
        </Note>
        <Columns>
          <Panel>
            <PanelHeader>
              <PanelTitle>Table of results</PanelTitle>
            </PanelHeader>
            <PanelBody $bottom={54}>
              <Bar>
                <Field>
                  <SelectFrame>
                    <SelectBox defaultValue="10">
                      <option>10</option>
                      <option>20</option>
                    </SelectBox>
                    <SelectArrow><ArrowDown /></SelectArrow>
                  </SelectFrame>
                  records
                </Field>
                <SearchField>
                  Search:
                  <SearchInput type="search" />
                </SearchField>
              </Bar>
              <ResultsTable>
                <colgroup>
                  {columns.map((c) => <col key={c.name} width={c.width} />)}
                </colgroup>
                <thead>
                  <tr>
                    {columns.map((c) => (
                      <HeadCell key={c.name} scope="col">
                        <SortButton type="button">
                          <span>{c.name}</span>
                          <SortIcon ascending={c.name === 'RANK'} />
                        </SortButton>
                      </HeadCell>
                    ))}
                  </tr>
                </thead>
                <tbody>
                  {results.map((r) => (
                    <Row key={r[0]}>
                      {r.map((v, i) => <Cell key={i}>{v}</Cell>)}
                    </Row>
                  ))}
                </tbody>
              </ResultsTable>
              <Bar>
                <span>Showing 1 to 5 of 5 entries</span>
                <Pager aria-label="Pages">
                  <PageButton type="button" aria-label="Previous"><Chevron /></PageButton>
                  <PageButton type="button" $active>1</PageButton>
                  <PageButton type="button" aria-label="Next"><Chevron right /></PageButton>
                </Pager>
              </Bar>
            </PanelBody>
          </Panel>
          <Highlight>
            <Panel>
              <PanelHeader $tall>
                <PanelTitle>3D visualization (top 10 models)</PanelTitle>
                <SelectFrame $inset>
                  <SelectBox $inset aria-label="Models" defaultValue="All models">
                    <option>All models</option>
                    <option>Model 1</option>
                  </SelectBox>
                  <SelectArrow><ArrowDown /></SelectArrow>
                </SelectFrame>
              </PanelHeader>
              <PanelBody>
                <Viewer><Molecule /></Viewer>
              </PanelBody>
            </Panel>
          </Highlight>
        </Columns>
      </Page>
    </>
  );
}
